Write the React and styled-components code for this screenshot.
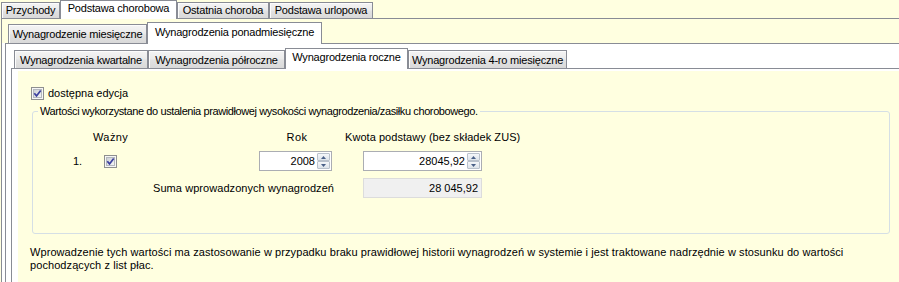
import styled, { createGlobalStyle } from "styled-components";

const GlobalStyle = createGlobalStyle`
  html, body {
    margin: 0;
    padding: 0;
    overflow: hidden;
    background: #ffffe0;
  }
  body {
    font-family: "Liberation Sans", Arial, sans-serif;
    font-size: 11px;
    line-height: 13px;
    color: #000;
  }
`;

const tabSizes = {
  1: { h: 18, ih: 16, ah: 19, ipt: 1, apt: 1 },
  2: { h: 24, ih: 19, ah: 22, ipt: 3, apt: 3 },
  3: { h: 24, ih: 18, ah: 21, ipt: 3, apt: 2 },
};

const mainTabs = [
  { label: "Przychody", w: 59 },
  { label: "Podstawa chorobowa", w: 117, active: true },
  { label: "Ostatnia choroba", w: 92 },
  { label: "Podstawa urlopowa", w: 104 },
];

const periodTabs = [
  { label: "Wynagrodzenie miesięczne", w: 139 },
  { label: "Wynagrodzenia ponadmiesięczne", w: 175, active: true },
];

const rangeTabs = [
  { label: "Wynagrodzenia kwartalne", w: 134 },
  { label: "Wynagrodzenia półroczne", w: 137 },
  { label: "Wynagrodzenia roczne", w: 123, active: true },
  { label: "Wynagrodzenia 4-ro miesięczne", w: 159 },
];

const TabRow = ({ tabs, level, pad, bg }) => {
  const s = tabSizes[level];
  return (
    <TabStrip $h={s.h} $pl={pad} $bg={bg}>
      {tabs.map((t) => (
        <Tab
          key={t.label}
          $w={t.w}
          $active={t.active}
          $h={t.active ? s.ah : s.ih}
          $pt={t.active ? s.apt : s.ipt}
        >
          {t.label}
        </Tab>
      ))}
    </TabStrip>
  );
};

const CheckBox = () => (
  <CheckIcon width="13" height="13" viewBox="0 0 13 13">
    <defs>
      <linearGradient id="cbFill" x1="0" y1="0" x2="1" y2="1">
        <stop offset="0" stopColor="#c9cdd3" />
        <stop offset="1" stopColor="#f7f7f7" />
      </linearGradient>
    </defs>
    <rect x="0.5" y="0.5" width="12" height="12" fill="#f6f6f6" stroke="#8e8f8f" />
    <rect x="2.5" y="2.5" width="8" height="8" fill="url(#cbFill)" stroke="#b4b8be" />
    <path
      d="M3.3 6.3 L5.5 8.9 L9.7 3.4"
      fill="none"
      stroke="#3b3f9e"
      strokeWidth="1.7"
    />
  </CheckIcon>
);

const Arrow = ({ up }) => (
  <svg width="5" height="3" viewBox="0 0 5 3">
    <path d={up ? "M0 3 L2.5 0 L5 3 Z" : "M0 0 L2.5 3 L5 0 Z"} fill="#4a6088" />
  </svg>
);

const NumberField = ({ value, width }) => (
  <NumberBox $w={width}>
    <NumberValue>{value}</NumberValue>
    <Spinner>
      <SpinButton>
        <Arrow up />
      </SpinButton>
      <SpinButton>
        <Arrow />
      </SpinButton>
    </Spinner>
  </NumberBox>
);

export default function App() {
  return (
    <>
      <GlobalStyle />
      <Root>
        <TabRow tabs={mainTabs} level={1} pad={1} bg="transparent" />
        <MainPane>
          <TabRow tabs={periodTabs} level={2} pad={6} bg="transparent" />
          <PeriodBody>
            <PeriodFrame>
              <TabRow tabs={rangeTabs} level={3} pad={3} bg="#fff" />
              <RangeFrame>
                <Page>
                  <EditRow>
                    <CheckBox />
                    <span>dostępna edycja</span>
                  </EditRow>
                  <Group>
                    <Legend>
                      Wartości wykorzystane do ustalenia prawidłowej wysokości
                      wynagrodzenia/zasiłku chorobowego.
                    </Legend>
                    <Grid>
                      <HeadCell $col="3">Ważny</HeadCell>
                      <HeadCell $col="5" $pl={3}>
                        Rok
                      </HeadCell>
                      <KwotaHead>Kwota podstawy (bez składek ZUS)</KwotaHead>

                      <RowNumber>1.</RowNumber>
                      <CheckCell>
                        <CheckBox />
                      </CheckCell>
                      <FieldCell $col="5">
                        <NumberField value="2008" width={73} />
                      </FieldCell>
                      <FieldCell $col="7">
                        <NumberField value="28045,92" width={119} />
                      </FieldCell>

                      <SumLabel>Suma wprowadzonych wynagrodzeń</SumLabel>
                      <FieldCell $col="7">
                        <SumBox>28 045,92</SumBox>
                      </FieldCell>
                    </Grid>
                  </Group>
                  <Note>
                    <NoteLine>
                      Wprowadzenie tych wartości ma zastosowanie w przypadku
                      braku prawidłowej historii wynagrodzeń w systemie i jest
                      traktowane nadrzędnie w stosunku do wartości
                    </NoteLine>
                    <NoteLine>pochodzących z list płac.</NoteLine>
                  </Note>
                </Page>
              </RangeFrame>
            </PeriodFrame>
          </PeriodBody>
        </MainPane>
      </Root>
    </>
  );
}

const Root = styled.div`
  width: 930px;
`;

const TabStrip = styled.div`
  display: flex;
  align-items: flex-end;
  height: ${(p) => p.$h}px;
  padding-left: ${(p) => p.$pl}px;
  background: ${(p) => p.$bg};
`;

const Tab = styled.div`
  position: relative;
  z-index: ${(p) => (p.$active ? 2 : 0)};
  box-sizing: border-box;
  flex: none;
  width: ${(p) => p.$w}px;
  height: ${(p) => p.$h}px;
  margin-bottom: ${(p) => (p.$active ? -1 : 0)}px;
  padding-top: ${(p) => p.$pt}px;
  border: 1px solid #898c95;
  border-bottom: none;
  background: ${(p) =>
    p.$active
      ? "#fff"
      : "linear-gradient(#f4f4f4, #ebebeb 45%, #e1e1e1 55%, #d9d9d9)"};
  box-shadow: ${(p) => (p.$active ? "none" : "inset 1px 1px 0 #fcfcfc")};
  letter-spacing: -0.2px;
  text-align: center;
  white-space: nowrap;
  overflow: hidden;
`;

const MainPane = styled.div`
  margin-left: 1px;
  border-top: 1px solid #898c95;
  border-left: 1px solid #898c95;
  background: #ffffe0;
`;

const PeriodBody = styled.div`
  padding-left: 3px;
  background: #fff;
`;

const PeriodFrame = styled.div`
  padding-left: 5px;
  border-top: 1px solid #898c95;
  border-left: 1px solid #898c95;
  background: #fff;
`;

const RangeFrame = styled.div`
  padding: 2px 0 0 6px;
  border-top: 1px solid #898c95;
  border-left: 1px solid #898c95;
  background: #fff;
`;

const Page = styled.div`
  min-height: 240px;
  padding-top: 16px;
  background: #ffffe0;
`;

const EditRow = styled.div`
  display: flex;
  align-items: center;
  gap: 4px;
  height: 13px;
  margin-left: 13px;
`;

const CheckIcon = styled.svg`
  display: block;
  flex: none;
`;

const Group = styled.fieldset`
  box-sizing: border-box;
  width: 858px;
  margin: 5px 0 0 14px;
  padding: 0;
  border: 1px solid #d5dfe5;
  border-radius: 3px;
`;

const Legend = styled.legend`
  margin-left: 5px;
  padding: 0 2px;
  line-height: 13px;
  letter-spacing: -0.4px;
`;

const Grid = styled.div`
  display: grid;
  grid-template-columns: 40px 20px 34px 132px 73px 31px 119px;
  grid-template-rows: 13px 20px 20px;
  row-gap: 7px;
  align-items: center;
  padding: 13px 0 35px 0;
`;

const HeadCell = styled.div`
  grid-column: ${(p) => p.$col};
  grid-row: 1;
  padding-left: ${(p) => p.$pl || 0}px;
  letter-spacing: 0.4px;
  text-align: center;
  white-space: nowrap;
`;

const KwotaHead = styled.div`
  grid-column: 6 / 8;
  grid-row: 1;
  padding-left: 13px;
  letter-spacing: 0.05px;
  white-space: nowrap;
`;

const RowNumber = styled.div`
  grid-column: 2;
  grid-row: 2;
`;

const CheckCell = styled.div`
  grid-column: 3;
  grid-row: 2;
  display: flex;
  justify-content: center;
`;

const FieldCell = styled.div`
  grid-column: ${(p) => p.$col};
  display: flex;
`;

const SumLabel = styled.div`
  grid-column: 2 / 7;
  grid-row: 3;
  justify-self: end;
  margin-right: 29px;
  letter-spacing: 0.06px;
  white-space: nowrap;
`;

const NumberBox = styled.div`
  box-sizing: border-box;
  display: flex;
  width: ${(p) => p.$w}px;
  height: 20px;
  border: 1px solid #abadb3;
  background: #fff;
`;

const NumberValue = styled.div`
  flex: 1;
  align-self: center;
  padding-right: 2px;
  text-align: right;
`;

const Spinner = styled.div`
  display: flex;
  flex-direction: column;
  width: 13px;
  margin: 1px 1px 1px 0;
`;

const SpinButton = styled.div`
  box-sizing: border-box;
  flex: 1;
  display: flex;
  align-items: center;
  justify-content: center;
  border: 1px solid #b9c1cc;
  border-radius: 1px;
  background: linear-gradient(#f5f7fa, #dde3ea);
`;

const SumBox = styled.div`
  box-sizing: border-box;
  width: 119px;
  height: 20px;
  padding: 3px 3px 0 0;
  border: 1px solid #dcdcdc;
  background: #f0f0f0;
  text-align: right;
`;

const Note = styled.div`
  margin: 12px 0 0 12px;
  letter-spacing: 0.08px;
`;

const NoteLine = styled.div`
  white-space: nowrap;
`;
